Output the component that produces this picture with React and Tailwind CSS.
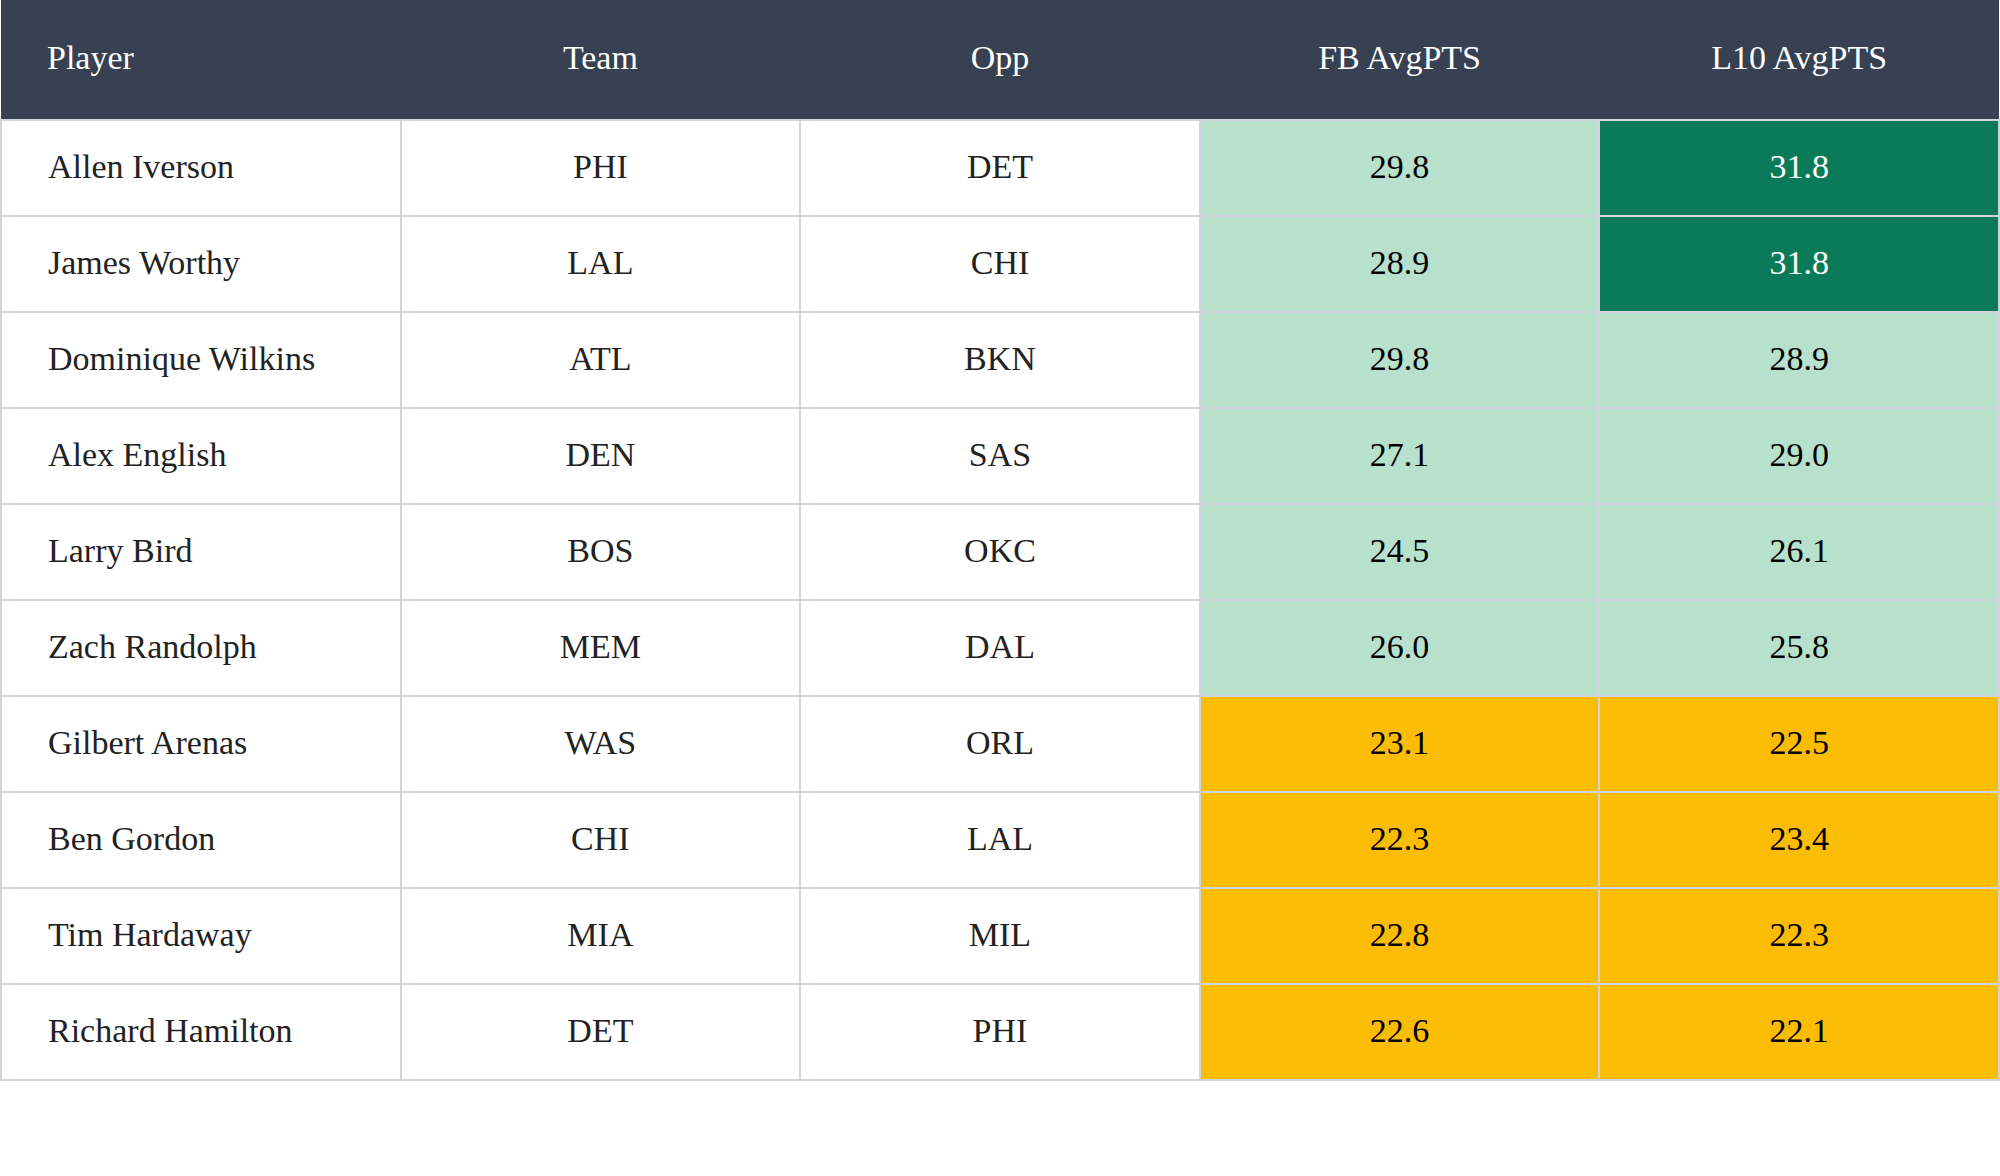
const rows = [
  { player: "Allen Iverson", team: "PHI", opp: "DET", fb: "29.8", l10: "31.8" },
  { player: "James Worthy", team: "LAL", opp: "CHI", fb: "28.9", l10: "31.8" },
  { player: "Dominique Wilkins", team: "ATL", opp: "BKN", fb: "29.8", l10: "28.9" },
  { player: "Alex English", team: "DEN", opp: "SAS", fb: "27.1", l10: "29.0" },
  { player: "Larry Bird", team: "BOS", opp: "OKC", fb: "24.5", l10: "26.1" },
  { player: "Zach Randolph", team: "MEM", opp: "DAL", fb: "26.0", l10: "25.8" },
  { player: "Gilbert Arenas", team: "WAS", opp: "ORL", fb: "23.1", l10: "22.5" },
  { player: "Ben Gordon", team: "CHI", opp: "LAL", fb: "22.3", l10: "23.4" },
  { player: "Tim Hardaway", team: "MIA", opp: "MIL", fb: "22.8", l10: "22.3" },
  { player: "Richard Hamilton", team: "DET", opp: "PHI", fb: "22.6", l10: "22.1" },
];

// color band by points
function tone(v) {
  const n = parseFloat(v);
  if (n >= 30) return "bg-[#0b7a59] text-white";
  if (n >= 24) return "bg-[#b7e1cd] text-black";
  return "bg-[#fabd03] text-black";
}

export default function App() {
  return (
    <div className="w-[2000px] h-[1176px] bg-white font-['Liberation_Serif',serif] text-[34px]">
      <table className="w-full border-collapse table-fixed">
        <thead>
          <tr className="bg-[#374151] text-white h-[120px]">
            <th className="font-normal text-left pl-[46px] pb-1 border-b-2 border-[#d1d5db]">Player</th>
            <th className="font-normal text-center pb-1 border-b-2 border-[#d1d5db]">Team</th>
            <th className="font-normal text-center pb-1 border-b-2 border-[#d1d5db]">Opp</th>
            <th className="font-normal text-center pb-1 border-b-2 border-[#d1d5db]">FB AvgPTS</th>
            <th className="font-normal text-center pb-1 border-b-2 border-[#d1d5db]">L10 AvgPTS</th>
          </tr>
        </thead>
        <tbody>
          {rows.map((r) => (
            <tr key={r.player} className="h-[96px] text-[#222]">
              <td className="pl-[46px] pb-1 border-2 border-[#d1d5db]">{r.player}</td>
              <td className="text-center pb-1 border-2 border-[#d1d5db]">{r.team}</td>
              <td className="text-center pb-1 border-2 border-[#d1d5db]">{r.opp}</td>
              <td className={`text-center pb-1 border-2 border-[#d1d5db] ${tone(r.fb)}`}>{r.fb}</td>
              <td className={`text-center pb-1 border-2 border-[#d1d5db] ${tone(r.l10)}`}>{r.l10}</td>
            </tr>
          ))}
        </tbody>
      </table>
    </div>
  );
}
